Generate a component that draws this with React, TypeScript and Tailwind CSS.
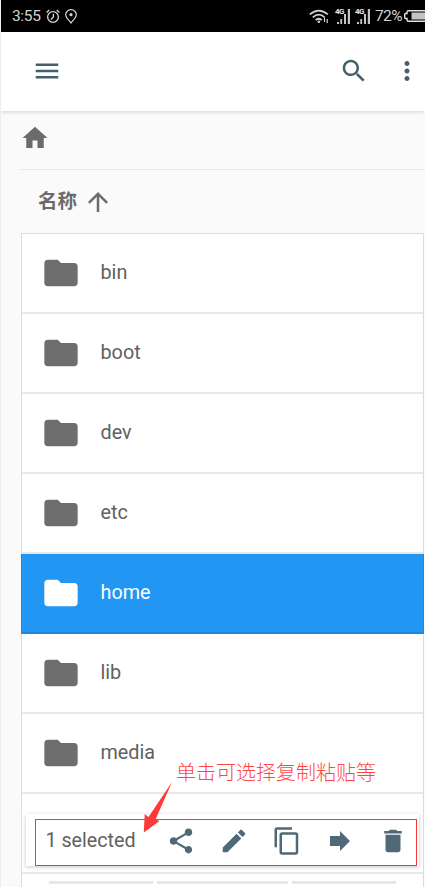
import type { ReactNode } from "react";

const folders = ["bin", "boot", "dev", "etc", "home", "lib", "media"];

function Icon({ d, className = "" }: { d: string; className?: string }) {
  return (
    <svg viewBox="0 0 24 24" fill="currentColor" className={`shrink-0 ${className}`}>
      <path d={d} />
    </svg>
  );
}

const paths = {
  menu: "M3 18h18v-2H3v2zm0-5h18v-2H3v2zm0-7v2h18V6H3z",
  search:
    "M15.5 14h-.79l-.28-.27C15.41 12.59 16 11.11 16 9.5 16 5.91 13.09 3 9.5 3S3 5.91 3 9.5 5.91 16 9.5 16c1.61 0 3.09-.59 4.23-1.57l.27.28v.79l5 4.99L20.49 19l-4.99-5zm-6 0C7.01 14 5 11.99 5 9.5S7.01 5 9.5 5 14 7.01 14 9.5 11.99 14 9.5 14z",
  more: "M12 8c1.1 0 2-.9 2-2s-.9-2-2-2-2 .9-2 2 .9 2 2 2zm0 2c-1.1 0-2 .9-2 2s.9 2 2 2 2-.9 2-2-.9-2-2-2zm0 6c-1.1 0-2 .9-2 2s.9 2 2 2 2-.9 2-2-.9-2-2-2z",
  home: "M10 20v-6h4v6h5v-8h3L12 3 2 12h3v8z",
  up: "M4 12l1.41 1.41L11 7.83V20h2V7.83l5.58 5.59L20 12l-8-8-8 8z",
  folder: "M10 4H4c-1.1 0-1.99.9-1.99 2L2 18c0 1.1.9 2 2 2h16c1.1 0 2-.9 2-2V8c0-1.1-.9-2-2-2h-8l-2-2z",
  share:
    "M18 16.08c-.76 0-1.44.3-1.96.77L8.91 12.7c.05-.23.09-.46.09-.7s-.04-.47-.09-.7l7.05-4.11c.54.5 1.25.81 2.04.81 1.66 0 3-1.34 3-3s-1.34-3-3-3-3 1.34-3 3c0 .24.04.47.09.7L8.04 9.81C7.5 9.31 6.79 9 6 9c-1.66 0-3 1.34-3 3s1.34 3 3 3c.79 0 1.5-.31 2.04-.81l7.12 4.16c-.05.21-.08.43-.08.65 0 1.61 1.31 2.92 2.92 2.92s2.92-1.31 2.92-2.92-1.31-2.92-2.92-2.92z",
  edit: "M3 17.25V21h3.75L17.81 9.94l-3.75-3.75L3 17.25zM20.71 7.04c.39-.39.39-1.02 0-1.41l-2.34-2.34c-.39-.39-1.02-.39-1.41 0l-1.83 1.83 3.75 3.75 1.83-1.83z",
  copy: "M16 1H4c-1.1 0-2 .9-2 2v14h2V3h12V1zm3 4H8c-1.1 0-2 .9-2 2v14c0 1.1.9 2 2 2h11c1.1 0 2-.9 2-2V7c0-1.1-.9-2-2-2zm0 16H8V7h11v14z",
  forward: "M12 8V4l8 8-8 8v-4H4V8z",
  trash: "M6 19c0 1.1.9 2 2 2h8c1.1 0 2-.9 2-2V7H6v12zM19 4h-3.5l-1-1h-5l-1 1H5v2h14V4z",
};

function Signal() {
  return (
    <span className="relative h-[17px] w-4 shrink-0">
      <svg viewBox="0 0 16 17" className="h-[17px] w-4" fill="#c4c4c4">
        <path d="M2 14h2v2H2zM5.300 11h1.800v5H5.300zM9 6h2v10H9zM12.800 1h2.200v15h-2.200z" />
      </svg>
      <span className="absolute -top-px left-0 text-[8px] leading-[9px] font-bold tracking-[-0.5px] text-[#e8e8e8]">4G</span>
    </span>
  );
}

function StatusBar() {
  return (
    <div className="flex h-8 shrink-0 items-center overflow-hidden bg-black pl-[11px] text-[15.5px] leading-8 text-[#d4d4d4]">
      <span className="w-[29px] shrink-0 whitespace-nowrap tracking-[-0.35px]">3:55</span>
      <svg viewBox="0 0 14 15" className="ml-[5px] h-[15px] w-[14px] shrink-0" fill="none" stroke="#d4d4d4" strokeWidth="1.3">
        <circle cx="7" cy="8" r="5.4" />
        <path d="M7.4 4.8V8L4.8 10.4M.6 3.4 3.3.9M13.4 3.4 10.7.9" />
      </svg>
      <svg viewBox="0 0 12 15" className="ml-[5px] h-[15px] w-3 shrink-0" fill="none" stroke="#d4d4d4" strokeWidth="1.2">
        <path d="M6 14C4.7 12 .7 9 .7 5.8a5.3 5.1 0 0 1 10.6 0C11.3 9 7.3 12 6 14z" />
        <circle cx="6" cy="5.7" r="1.6" fill="#d4d4d4" stroke="none" />
      </svg>
      <svg viewBox="0 0 20 15" className="ml-auto h-[15px] w-5 shrink-0" fill="none" stroke="#d4d4d4" strokeWidth="1.7">
        <path d="M.8 5.4Q9.8-2.3 18.8 5.4M3.8 8.4Q9.8 3 15.7 8.4M6.7 11.2Q9.8 8.3 12.8 11.2" />
        <circle cx="9.8" cy="12.7" r="1.3" fill="#d4d4d4" stroke="none" />
        <path d="M15.5 9v4M18.2 10v4" strokeWidth="1.2" />
      </svg>
      <span className="ml-[6px] flex gap-1">
        <Signal />
        <Signal />
      </span>
      <span className="ml-[4px] w-[29px] shrink-0 whitespace-nowrap text-[15.5px] tracking-[-0.6px]">72%</span>
      <svg viewBox="0 0 21 12" className="h-3 w-[21px] shrink-0" fill="none">
        <path d="M22 .7H4.5Q3 .7 3 2.2V3.5H1.5Q.7 3.5.7 4.5V7.5Q.7 8.5 1.5 8.5H3V9.8Q3 11.3 4.5 11.3H22" stroke="#e4e4e4" strokeWidth="1.4" />
        <path d="M7.5 2.5H22V9.5H7.5z" fill="#c4c4c4" />
      </svg>
    </div>
  );
}

function ToolButton({ children }: { children: ReactNode }) {
  return <button className="flex w-[53.1px] shrink-0 justify-center">{children}</button>;
}

export default function App() {
  return (
    <div className="relative flex h-[887px] w-[425px] flex-col overflow-hidden border-l border-[#eeeeee] bg-[#fafafa] font-['Roboto','Noto_Sans_CJK_SC',sans-serif] text-[#616161]">
      <StatusBar />
      <header className="flex h-[79px] shrink-0 items-center bg-white pr-[3px] pb-px pl-[31px] text-[#455f6d] shadow-[0_1px_4px_rgba(0,0,0,0.16)]">
        <Icon d={paths.menu} className="size-[30px]" />
        <Icon d={paths.search} className="ml-auto size-[30px]" />
        <Icon d={paths.more} className="ml-[23px] size-[30px]" />
      </header>

      <main className="flex flex-col pl-5">
        <nav className="flex h-[59px] items-center border-b border-[#e6e6e6] pb-[4px] text-[#6b6b6b]">
          <Icon d={paths.home} className="-ml-px size-[30px]" />
        </nav>
        <div className="flex h-[63px] items-center gap-[5.5px] pl-[17px] text-[#6b6b6b]">
          <span className="text-[19.5px] leading-[30px] font-bold">名称</span>
          <Icon d={paths.up} className="size-[30px]" />
        </div>
        <ul className="mr-px flex flex-col border-x border-t border-[#dcdcdc] bg-white">
          {folders.map((name) => (
            <li
              key={name}
              className={`flex h-20 shrink-0 items-center gap-[19.5px] border-b-2 ${
                name === "home"
                  ? "-mx-px border-x border-[#1e88de] bg-[#2196f3] pl-[19px] text-white"
                  : "border-[#e9e9e9] pl-[19px]"
              }`}
            >
              <Icon d={paths.folder} className={`size-10 ${name === "home" ? "text-white" : "text-[#6e6e6e]"}`} />
              <span className="text-[19.8px] leading-7">{name}</span>
            </li>
          ))}
          <li className="h-20 shrink-0 border-b-2 border-[#e9e9e9]" />
          <li className="flex h-5 shrink-0 gap-1 pt-[7px] pl-[27px]">
            <span className="h-[3px] w-[104px] bg-[#e3e8ec]" />
            <span className="h-[3px] w-[131px] bg-[#e3e8ec]" />
            <span className="h-[3px] w-[104px] bg-[#e3e8ec]" />
          </li>
        </ul>
      </main>

      <div className="absolute top-[814px] left-[25px] flex h-[52px] w-[393px] items-center bg-white pt-px pl-[19.5px] text-[#4f6977] shadow-[0_1px_4px_rgba(0,0,0,0.22)]">
        <span className="w-[108.5px] shrink-0 text-[19.7px] leading-7 whitespace-nowrap text-[#616161]">1 selected</span>
        <ToolButton><Icon d={paths.share} className="size-[30px]" /></ToolButton>
        <ToolButton><Icon d={paths.edit} className="size-[30px]" /></ToolButton>
        <ToolButton><Icon d={paths.copy} className="size-[30px]" /></ToolButton>
        <ToolButton><Icon d={paths.forward} className="size-[30px]" /></ToolButton>
        <ToolButton><Icon d={paths.trash} className="size-[30px]" /></ToolButton>
      </div>
      <div className="absolute top-[819px] left-[34px] h-[47px] w-[382px] border border-[#fa3535]" />
      <svg viewBox="0 0 30 52" className="absolute top-[781px] left-[142px] h-[52px] w-[30px]" fill="#ff3838">
        <path d="M29 1 12.5 38.5 16.5 40 .8 51.5 1.7 33 5.5 36z" />
      </svg>
      <p className="absolute top-[759px] left-[175px] text-[20px] leading-7 font-light whitespace-nowrap text-[#ff4646]">
        单击可选择复制粘贴等
      </p>
    </div>
  );
}
